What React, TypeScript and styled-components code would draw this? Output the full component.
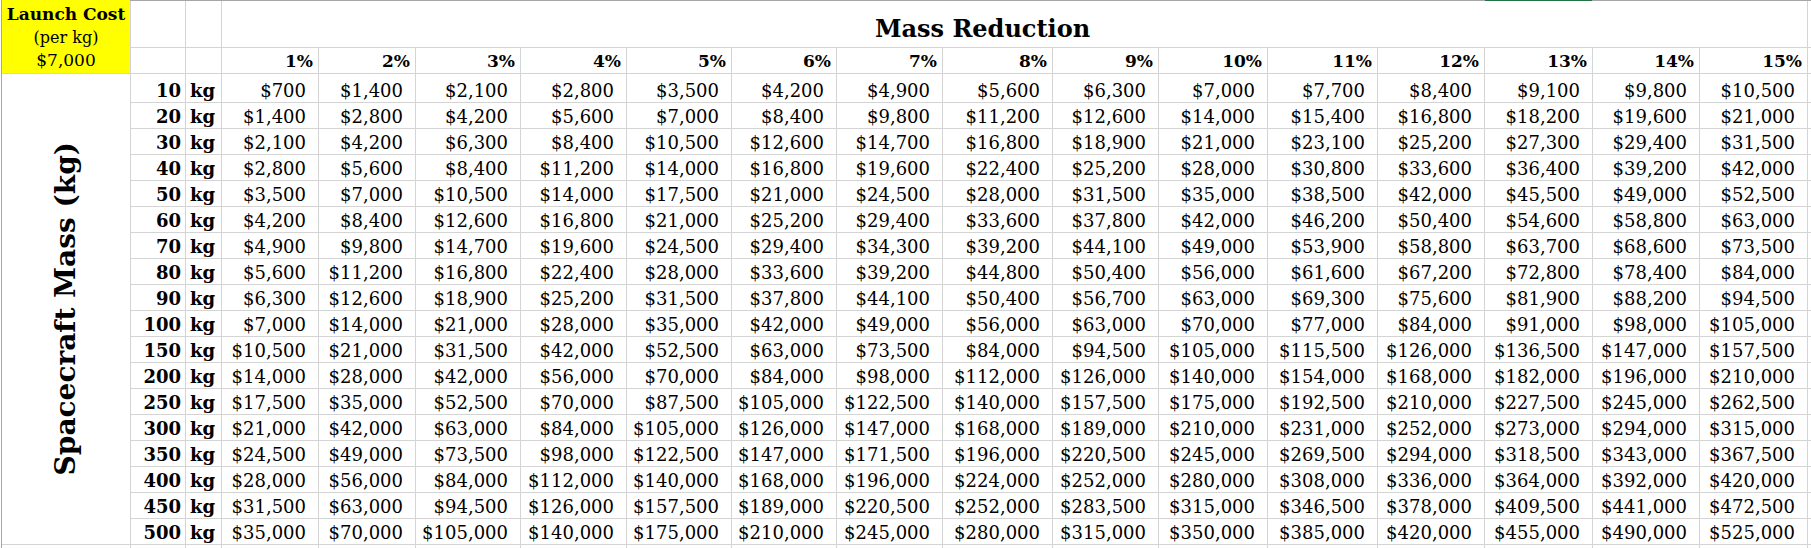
import React from 'react';
import styled, { createGlobalStyle } from 'styled-components';

const GlobalStyle = createGlobalStyle`
  html, body {
    margin: 0;
    padding: 0;
    overflow: hidden;
    background: #ffffff;
  }

  body {
    font-family: "DejaVu Serif", "Liberation Serif", serif;
    color: #000000;
  }
`;

const LAUNCH_COST = 7000;
const MASSES = [10, 20, 30, 40, 50, 60, 70, 80, 90, 100, 150, 200, 250, 300, 350, 400, 450, 500];
const PERCENTS = Array.from({ length: 15 }, (_, i) => i + 1);

// widths of column A, B, C, the 15 percent columns and the sliver of the next column
const COLUMN_WIDTHS = [128, 54, 35, 96, 96, 104, 105, 104, 104, 105, 109, 105, 108, 109, 106, 107, 106, 107, 3];
const columnTemplate = COLUMN_WIDTHS.map((w) => `${w}px`).join(' ');

const GRID_COLOR = '#d4d4d4';

const formatMoney = (value: number) => `$${value.toLocaleString('en-US')}`;

const Page = styled.div`
  width: 1811px;
  height: 548px;
  padding-left: 1px;
  box-sizing: border-box;
`;

const EdgeStrip = styled.div`
  display: grid;
  grid-template-columns: ${columnTemplate};
  column-gap: 1px;
  height: 1px;
  border-left: 1px solid #a6a6a6;
  background: #a6a6a6;
`;

const EdgeSegment = styled.div<{ $tone?: 'yellow' | 'green' }>`
  background: ${(p) => (p.$tone === 'yellow' ? '#ffff00' : p.$tone === 'green' ? '#217346' : 'transparent')};
`;

const Sheet = styled.div`
  display: grid;
  grid-template-columns: ${columnTemplate};
  grid-template-rows: 46px 25px 28px repeat(17, 25px) 3px;
  gap: 1px;
  background: ${GRID_COLOR};
  border-left: 1px solid #a6a6a6;
`;

const Cell = styled.div<{ $rowSpan?: number; $colSpan?: number }>`
  grid-row: span ${(p) => p.$rowSpan ?? 1};
  grid-column: span ${(p) => p.$colSpan ?? 1};
  display: flex;
  align-items: flex-end;
  justify-content: flex-end;
  background: #ffffff;
  font-size: 18px;
  line-height: 21px;
  white-space: nowrap;
  overflow: hidden;
  padding: 0 0 1px;
  min-width: 0;
`;

const LaunchCostCell = styled(Cell)`
  flex-direction: column;
  align-items: center;
  justify-content: center;
  background: #ffff00;
  line-height: 23px;
  padding: 0;
`;

const LaunchTitle = styled.span`
  font-size: 17px;
  font-weight: 700;
`;

const LaunchNote = styled.span<{ $size: number }>`
  font-size: ${(p) => p.$size}px;
`;

const TitleCell = styled(Cell)`
  justify-content: center;
  padding: 0 64px 4px 0;
  font-size: 24px;
  font-weight: 700;
  line-height: 28px;
`;

const AxisCell = styled(Cell)`
  align-items: center;
  justify-content: center;
  padding: 0;
`;

const AxisLabel = styled.span`
  writing-mode: vertical-rl;
  transform: rotate(180deg);
  font-size: 28px;
  font-weight: 700;
  line-height: 32px;
`;

const PercentCell = styled(Cell)`
  font-size: 17px;
  font-weight: 700;
  padding-right: 5px;
`;

const MassCell = styled(Cell)`
  font-weight: 700;
  padding-right: 4px;
`;

const UnitCell = styled(Cell)`
  justify-content: flex-start;
  font-weight: 700;
  padding-left: 4px;
`;

const ValueCell = styled(Cell)`
  padding-right: 12px;
`;

export default function App() {
  return (
    <>
      <GlobalStyle />
      <Page>
        <EdgeStrip>
          {COLUMN_WIDTHS.map((_, i) => (
            <EdgeSegment key={i} $tone={i === 0 ? 'yellow' : i === 15 ? 'green' : undefined} />
          ))}
        </EdgeStrip>

        <Sheet>
          <LaunchCostCell $rowSpan={2}>
            <LaunchTitle>Launch Cost</LaunchTitle>
            <LaunchNote $size={16}>(per kg)</LaunchNote>
            <LaunchNote $size={17}>{formatMoney(LAUNCH_COST)}</LaunchNote>
          </LaunchCostCell>
          <Cell />
          <Cell />
          <TitleCell $colSpan={15}>Mass Reduction</TitleCell>
          <Cell />

          <Cell />
          <Cell />
          {PERCENTS.map((pct) => (
            <PercentCell key={pct}>{pct}%</PercentCell>
          ))}
          <Cell />

          {MASSES.map((mass, rowIndex) => (
            <React.Fragment key={mass}>
              {rowIndex === 0 && (
                <AxisCell $rowSpan={MASSES.length}>
                  <AxisLabel>Spacecraft Mass (kg)</AxisLabel>
                </AxisCell>
              )}
              <MassCell>{mass}</MassCell>
              <UnitCell>kg</UnitCell>
              {PERCENTS.map((pct) => (
                <ValueCell key={pct}>{formatMoney((mass * pct * LAUNCH_COST) / 100)}</ValueCell>
              ))}
              <Cell />
            </React.Fragment>
          ))}

          {COLUMN_WIDTHS.map((_, i) => (
            <Cell key={`tail-${i}`} />
          ))}
        </Sheet>
      </Page>
    </>
  );
}
